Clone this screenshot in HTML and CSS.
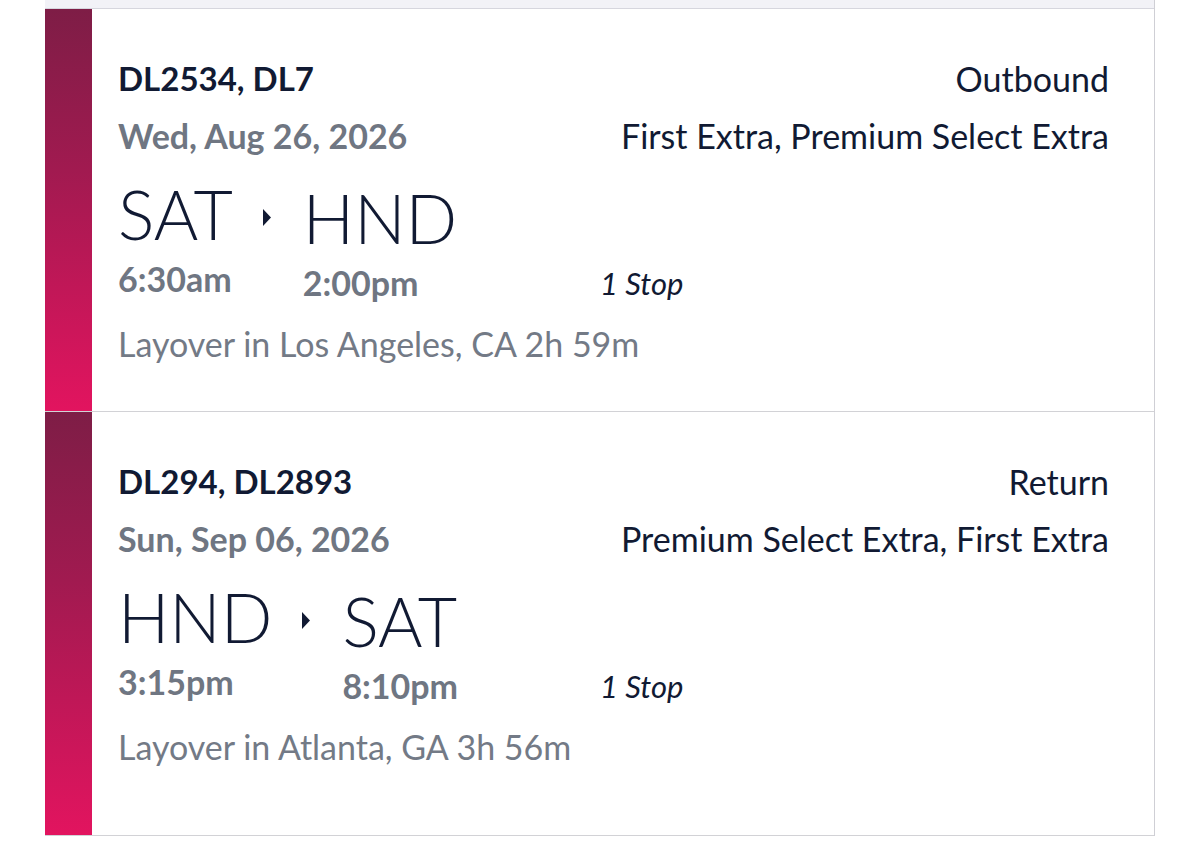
FILE: index.html
```html
<!DOCTYPE html>
<html lang="en">
<head>
<meta charset="utf-8">
<title>Trip summary</title>
<link rel="stylesheet" href="styles.css">
</head>
<body>
<div class="panel">
  <div class="topstrip"></div>

  <section class="card">
    <div class="bar"></div>
    <div class="content">
      <div class="head">
        <div class="flights">DL2534, DL7</div>
        <div class="dir">Outbound</div>
        <div class="date">Wed, Aug 26, 2026</div>
        <div class="fare">First Extra, Premium Select Extra</div>
      </div>
      <div class="route">
        <div class="legs">
          <div class="col">
            <div class="code">SAT</div>
            <div class="time">6:30am</div>
          </div>
          <div class="arrow"><svg width="8" height="17" viewBox="0 0 8 17"><path d="M0 0 L8 8.5 L0 17 Z" fill="#111a33"/></svg></div>
          <div class="col dest">
            <div class="code">HND</div>
            <div class="time">2:00pm</div>
          </div>
        </div>
        <div class="stops">1 Stop</div>
      </div>
      <div class="layover">Layover in Los Angeles, CA 2h 59m</div>
    </div>
  </section>

  <section class="card last">
    <div class="bar"></div>
    <div class="content">
      <div class="head">
        <div class="flights">DL294, DL2893</div>
        <div class="dir">Return</div>
        <div class="date">Sun, Sep 06, 2026</div>
        <div class="fare">Premium Select Extra, First Extra</div>
      </div>
      <div class="route">
        <div class="legs">
          <div class="col">
            <div class="code">HND</div>
            <div class="time">3:15pm</div>
          </div>
          <div class="arrow"><svg width="8" height="17" viewBox="0 0 8 17"><path d="M0 0 L8 8.5 L0 17 Z" fill="#111a33"/></svg></div>
          <div class="col dest">
            <div class="code">SAT</div>
            <div class="time">8:10pm</div>
          </div>
        </div>
        <div class="stops">1 Stop</div>
      </div>
      <div class="layover">Layover in Atlanta, GA 3h 56m</div>
    </div>
  </section>
</div>
</body>
</html>
```

FILE: styles.css
```css
html, body {
  margin: 0;
  padding: 0;
  background: #ffffff;
}

body {
  font-family: Lato, "Open Sans", "Liberation Sans", sans-serif;
  color: #111a33;
}

.panel {
  margin-left: 45px;
  width: 1110px;
  box-sizing: border-box;
  border-right: 1px solid #cfcfd5;
}

.topstrip {
  height: 8px;
  background: #f2f2f7;
  border-bottom: 1px solid #d6d6de;
}

.card {
  display: flex;
  border-bottom: 1px solid #d2d2d6;
}

.bar {
  width: 47px;
  flex-shrink: 0;
  background: linear-gradient(180deg, #7e1d46 0%, #a11a50 40%, #e2145f 100%);
}

.content {
  flex: 1;
  padding: 41px 45px 47px 26px;
}

.card.last .content {
  padding-bottom: 68px;
}

.head {
  display: grid;
  grid-template-columns: auto auto;
  justify-content: space-between;
  font-size: 33px;
  line-height: 57px;
}

.flights {
  font-weight: 700;
}

.date {
  font-weight: 700;
  font-size: 34px;
  color: #6f7682;
}

.dir, .fare {
  text-align: right;
  font-weight: 400;
  font-size: 34px;
}

.route {
  display: flex;
  align-items: flex-start;
  margin-top: 15px;
}

.legs {
  display: flex;
  width: 482px;
  flex-shrink: 0;
}

.col {
  display: flex;
  flex-direction: column;
}

.col.dest {
  padding-top: 4px;
}

.code {
  font-size: 68px;
  line-height: 70px;
  font-weight: 300;
}

.time {
  margin-top: 10px;
  font-size: 34px;
  line-height: 40px;
  font-weight: 700;
  color: #6f7682;
}

.arrow {
  padding: 30px 32px 0 30px;
}

.arrow svg {
  display: block;
}

.stops {
  margin-top: 84px;
  font-size: 31px;
  line-height: 40px;
  font-style: italic;
}

.layover {
  margin-top: 21px;
  font-size: 34px;
  line-height: 40px;
  color: #737a86;
}
```
